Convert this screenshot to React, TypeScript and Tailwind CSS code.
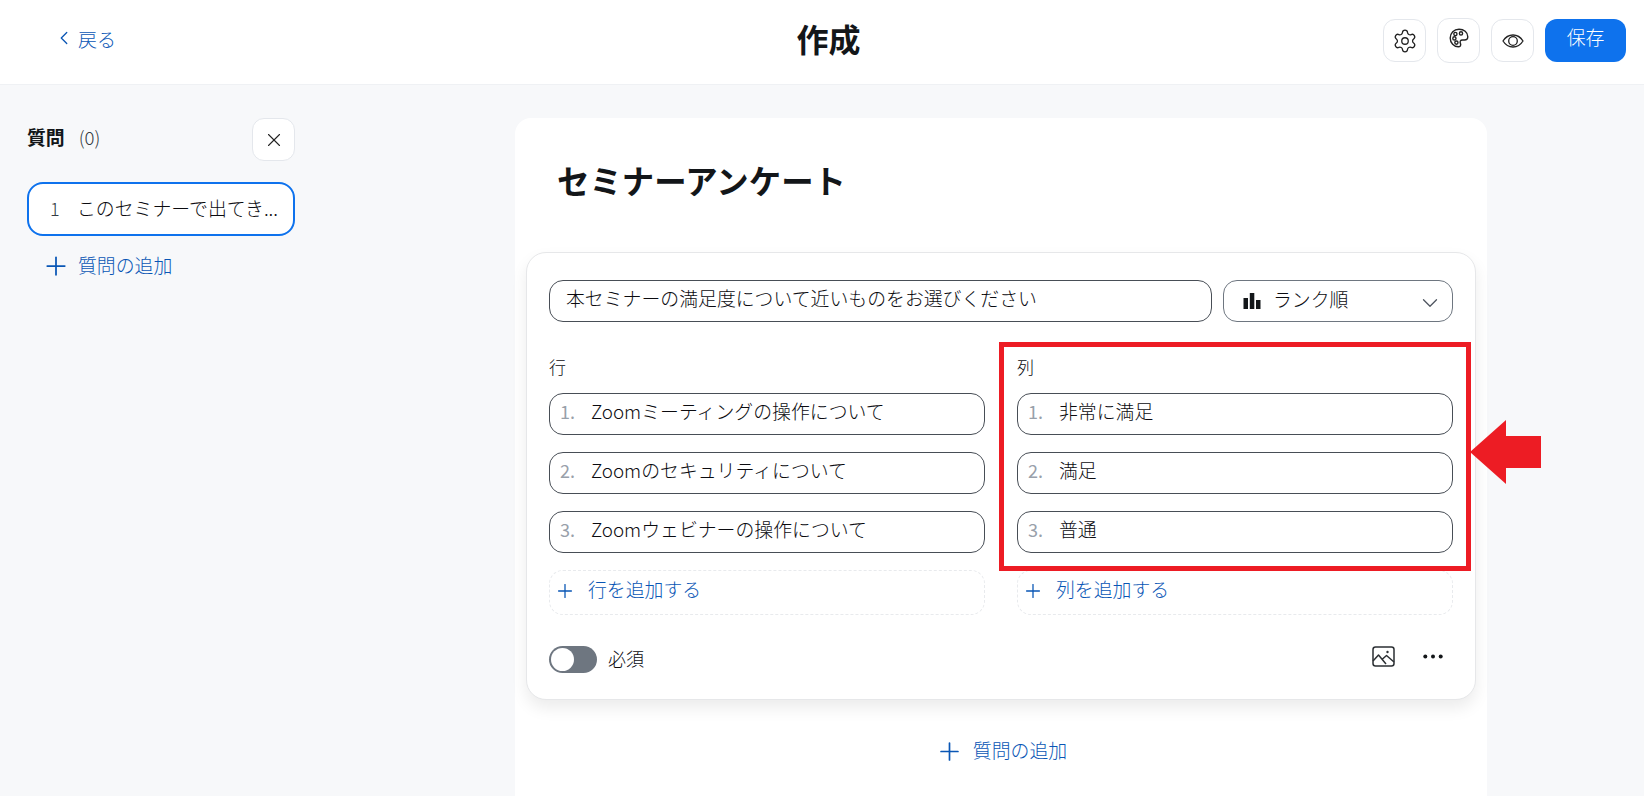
import { ChevronLeft, ChevronDown, Plus, Settings, X } from "lucide-react";

const font = { fontFamily: '"Noto Sans CJK JP", sans-serif' };

function IconButton({ children, tall }: { children: React.ReactNode; tall?: boolean }) {
  return (
    <button className={`flex w-[43px] items-center justify-center rounded-[12px] border border-[#e4e7ec] bg-white text-[#222] ${tall ? "h-[45px]" : "h-[43px]"}`}>
      {children}
    </button>
  );
}

function Field({ n, text }: { n: number; text: string }) {
  return (
    <div className="flex h-[42px] items-center rounded-[14px] border border-[#484e56] bg-white pb-[5px] pl-[10px]">
      <span className="w-[31px] text-[18px] text-[#98a0aa]">{n}.</span>
      <span className="text-[18.86px] font-light leading-none text-[#0b0b10]">{text}</span>
    </div>
  );
}

function AddRow({ text }: { text: string }) {
  return (
    <div className="mt-[17px] flex h-[45px] items-center rounded-[14px] border border-dashed border-[#e8eaed] pb-[6px] pl-[4px] text-[#0956b5]">
      <Plus size={22} strokeWidth={1.4} className="mr-[12px] mt-[3px]" />
      <span className="text-[18.86px] font-light leading-none">{text}</span>
    </div>
  );
}

function Column({ label, items, add }: { label: string; items: string[]; add: string }) {
  return (
    <div className="flex w-[436px] flex-col">
      <div className="mb-[14px] h-[20px] text-[17px] font-light leading-[16px] text-[#0b0b10]">{label}</div>
      <div className="flex flex-col gap-[17px]">
        {items.map((t, i) => (
          <Field key={t} n={i + 1} text={t} />
        ))}
      </div>
      <AddRow text={add} />
    </div>
  );
}

export default function App() {
  return (
    <div style={font} className="flex h-[796px] w-[1644px] flex-col overflow-hidden bg-[#f7f8fa]">
      <header className="grid h-[85px] shrink-0 grid-cols-[1fr_auto_1fr] items-center border-b border-[#eff1f4] bg-white pr-[18px]">
        <div className="flex items-center pb-[8px] pl-[53px] text-[#0956b5]">
          <ChevronLeft size={22} strokeWidth={1.4} className="mr-[3px]" />
          <span className="text-[19px] font-light leading-none">戻る</span>
        </div>
        <h1 className="ml-[31px] pb-[9px] text-[32px] font-bold leading-none text-[#131619]">作成</h1>
        <div className="flex items-center justify-end gap-[11px] pb-[3px]">
          <IconButton><Settings size={26} strokeWidth={1.2} /></IconButton>
          <IconButton tall>
            <svg width="20" height="20" viewBox="0 0 20 20" fill="none" stroke="#222" strokeWidth="1.4" className="-mt-[6px]">
              <path d="M10 1.2C5 1.2 1.2 5 1.2 10s3.800 8.800 8 8.800c2.200 0 3-1.600 2.200-3.400-.8-1.800 0-3.400 2-3.400h2c2 0 3.400-1.200 3.400-3.200C18.800 4 14.800 1.200 10 1.200Z" />
              <circle cx="6.400" cy="6" r="1.600" />
              <circle cx="12" cy="5.400" r="1.600" />
              <circle cx="5.400" cy="10.400" r="1.600" />
              <circle cx="7.400" cy="14.600" r="1.600" />
            </svg>
          </IconButton>
          <IconButton>
            <svg width="22" height="14" viewBox="0 0 22 14" fill="none" stroke="#222" strokeWidth="1.3">
              <path d="M1 7C3.500 3 7 1 11 1s7.500 2 10 6c-2.500 4-6 6-10 6S3.500 11 1 7Z" />
              <circle cx="11" cy="7" r="4.300" />
            </svg>
          </IconButton>
          <button className="h-[43px] w-[81px] rounded-[12px] bg-[#0e72ed] pb-[6px] text-[18.86px] font-light text-white">保存</button>
        </div>
      </header>

      <div className="flex min-h-0 flex-1">
        <aside className="w-[515px] shrink-0 pl-[27px] pt-[33px]">
          <div className="w-[268px]">
            <div className="flex h-[43px] items-center justify-between">
              <div className="flex items-center pb-[5px]">
                <span className="text-[18.86px] font-bold leading-none text-[#131619]">質問</span>
                <span className="ml-[14px] text-[18.6px] font-light leading-none text-[#333a43]">(0)</span>
              </div>
              <button className="flex h-[43px] w-[43px] items-center justify-center rounded-[12px] border border-[#e4e7ec] bg-white text-[#222]">
                <X size={22} strokeWidth={1.2} />
              </button>
            </div>
            <div className="mt-[21px] flex h-[54px] items-center rounded-[16px] border-2 border-[#0e72ed] bg-white pb-[2px] pl-[21px]">
              <span className="w-[27px] text-[18px] font-light text-[#333a43]">1</span>
              <span className="whitespace-nowrap text-[18.86px] font-light leading-normal text-[#0b0b10]">このセミナーで出てき...</span>
            </div>
            <div className="mt-[13px] flex items-center pl-[14px] text-[#0956b5]">
              <Plus size={30} strokeWidth={1.4} className="mr-[7px] mt-[2px]" />
              <span className="text-[18.86px] font-light leading-none">質問の追加</span>
            </div>
          </div>
        </aside>

        <main className="mt-[33px] w-[972px] shrink-0 rounded-t-[16px] bg-white px-[11px]">
          <h2 className="pl-[31px] pt-[46px] text-[32.4px] font-bold leading-none text-[#131619]">セミナーアンケート</h2>
          <section className="relative mt-[56px] h-[448px] rounded-[20px] border border-[#e6e7e9] bg-white px-[22px] pt-[27px] shadow-[0_8px_16px_rgba(0,0,0,0.08)]">
            <div className="flex gap-[11px]">
              <div className="flex h-[42px] w-[663px] items-center rounded-[14px] border border-[#484e56] pb-[5px] pl-[16px] text-[18.86px] font-light leading-none text-[#0b0b10]">
                本セミナーの満足度について近いものをお選びください
              </div>
              <div className="flex h-[42px] flex-1 items-center rounded-[14px] border border-[#6e7680] pl-[19px] pr-[9px]">
                <svg width="18" height="18" viewBox="0 0 18 18" className="mr-[12px]" fill="#131619">
                  <rect x="0.5" y="6" width="4.5" height="11" />
                  <rect x="6.800" y="1" width="4.500" height="16" />
                  <rect x="13" y="8" width="4.500" height="9" />
                </svg>
                <span className="flex-1 pb-[3px] text-[18.86px] font-light leading-none text-[#0b0b10]">ランク順</span>
                <ChevronDown size={26} strokeWidth={1.2} className="mt-[4px] text-[#4f5660]" />
              </div>
            </div>
            <div className="mt-[37px] flex justify-between">
              <Column
                label="行"
                items={["Zoomミーティングの操作について", "Zoomのセキュリティについて", "Zoomウェビナーの操作について"]}
                add="行を追加する"
              />
              <Column label="列" items={["非常に満足", "満足", "普通"]} add="列を追加する" />
            </div>
            <div className="mt-[31px] flex items-center justify-between pr-[10px]">
              <div className="flex items-center">
                <div className="flex h-[27px] w-[48px] items-center rounded-full bg-[#6e7680] pl-[2px]">
                  <div className="h-[23px] w-[23px] rounded-full bg-white" />
                </div>
                <span className="mb-[4px] ml-[11px] text-[18px] font-light leading-none text-[#0b0b10]">必須</span>
              </div>
              <div className="-mt-[6px] flex items-center gap-[28px]">
                <svg width="23" height="21" viewBox="0 0 23 21" fill="none" stroke="#2b2f33" strokeWidth="1.5" strokeLinejoin="round">
                  <rect x="1" y="1" width="21" height="19" rx="2.500" />
                  <path d="M1 15 6.500 9l7.500 9M10.500 13l4-3.500 7.500 6.500" />
                  <circle cx="15.500" cy="6" r="1.200" fill="#2b2f33" stroke="none" />
                </svg>
                <svg width="20" height="5" viewBox="0 0 20 5" fill="#131619">
                  <circle cx="2.300" cy="2.500" r="2" />
                  <circle cx="10" cy="2.500" r="2" />
                  <circle cx="17.700" cy="2.500" r="2" />
                </svg>
              </div>
            </div>

            <div className="pointer-events-none absolute left-[472px] top-[89px] h-[229px] w-[472px] border-[5px] border-[#ed1c24]" />
            <svg width="71" height="64" viewBox="0 0 71 64" className="absolute left-[943px] top-[167px]" fill="#ed1c24">
              <path d="M0 32 36 0v16h35v32H36v16z" />
            </svg>
          </section>
          <div className="mt-[35px] flex items-center justify-center text-[#0956b5]">
            <Plus size={29} strokeWidth={1.4} className="mr-[9px] mt-[2px]" />
            <span className="text-[18.86px] font-light leading-none">質問の追加</span>
          </div>
        </main>
      </div>
    </div>
  );
}
